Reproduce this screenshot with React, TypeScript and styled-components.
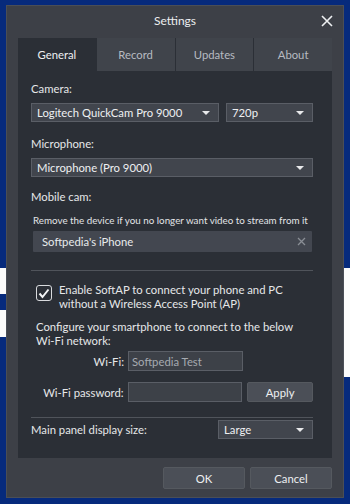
import styled, { createGlobalStyle } from "styled-components";

const GlobalStyle = createGlobalStyle`
  html, body {
    margin: 0;
    padding: 0;
    background: #062a7c;
  }
  body {
    font-family: Lato, "Liberation Sans", sans-serif;
    font-size: 11.3px;
    color: #e6e7e9;
  }
`;

const Desktop = styled.div`
  position: relative;
  width: 350px;
  height: 504px;
  padding: 5px 6px 6px 6px;
  box-sizing: border-box;
  overflow: hidden;
`;

const BackWindow = styled.div<{ $left: number; $top: number; $w: number; $h: number }>`
  position: absolute;
  left: ${(p) => p.$left}px;
  top: ${(p) => p.$top}px;
  width: ${(p) => p.$w}px;
  height: ${(p) => p.$h}px;
  background: #fbfbfb;
`;

const Window = styled.div`
  position: relative;
  z-index: 1;
  height: 100%;
  background: #3d4047;
  border: 1px solid #4a4e56;
  box-sizing: border-box;
  display: flex;
  flex-direction: column;
  padding: 0 11px 8px 11px;
`;

const TitleBar = styled.div`
  position: relative;
  height: 32px;
  box-sizing: border-box;
  padding-bottom: 4px;
  display: flex;
  align-items: center;
  justify-content: center;
  font-size: 12px;
  color: #eceef0;
`;

const Close = styled.div`
  position: absolute;
  right: -2px;
  top: 8px;
  width: 14px;
  height: 14px;
`;

const Tabs = styled.div`
  display: flex;
  gap: 1px;
  height: 33px;
  flex-shrink: 0;
  background: #2b2f36;
`;

const Tab = styled.div<{ $active?: boolean }>`
  flex: 1;
  display: flex;
  align-items: center;
  justify-content: center;
  background: ${(p) => (p.$active ? "#2b2f36" : "#40444b")};
  color: ${(p) => (p.$active ? "#eef0f2" : "#b7bbc1")};
`;

const Panel = styled.div`
  flex: 1;
  background: #2b2f36;
  padding: 10px 19px 0 13px;
  display: flex;
  flex-direction: column;
`;

const Label = styled.div<{ $mt?: number }>`
  margin-top: ${(p) => p.$mt ?? 0}px;
  line-height: 16px;
  margin-bottom: 6px;
`;

const Row = styled.div`
  display: flex;
  gap: 7px;
  align-items: center;
`;

const Select = styled.div<{ $w?: number }>`
  ${(p) => (p.$w ? `width: ${p.$w}px;` : "flex: 1 1 0;")}
  height: 19px;
  box-sizing: border-box;
  background: #41454d;
  border: 1px solid #5a5e66;
  display: flex;
  align-items: center;
  justify-content: space-between;
  padding: 0 8px 0 5px;
  color: #eef0f2;
`;

const FullSelect = styled(Select)`
  flex: none;
`;

const Caret = styled.span`
  width: 0;
  height: 0;
  border-left: 4px solid transparent;
  border-right: 4px solid transparent;
  border-top: 4px solid #e8e9eb;
`;

const Hint = styled.div`
  font-size: 9.8px;
  line-height: 14px;
  margin: 2px 0 4px 2px;
  color: #e2e4e6;
  white-space: nowrap;
`;

const DeviceBox = styled.div`
  margin: 0 1px 0 2px;
  height: 21px;
  flex-shrink: 0;
  background: #434750;
  border-radius: 1px;
  display: flex;
  align-items: center;
  justify-content: space-between;
  padding: 0 6px 0 9px;
  color: #e8eaec;
`;

const Separator = styled.div<{ $mt: number; $mb: number }>`
  height: 1px;
  flex-shrink: 0;
  background: #50545b;
  margin: ${(p) => p.$mt}px 0 ${(p) => p.$mb}px 0;
`;

const CheckRow = styled.div`
  display: flex;
  gap: 7px;
  padding-left: 5px;
  line-height: 14px;
`;

const Check = styled.div`
  width: 14px;
  height: 14px;
  margin-top: 2px;
  flex-shrink: 0;
  border: 1.5px solid #d9dbde;
  border-radius: 3px;
  display: flex;
  align-items: center;
  justify-content: center;
`;

const Para = styled.div`
  padding-left: 5px;
  margin-top: 9px;
  line-height: 14px;
  white-space: nowrap;
`;

const FieldRow = styled.div<{ $mt: number }>`
  display: flex;
  align-items: center;
  margin-top: ${(p) => p.$mt}px;
`;

const FieldLabel = styled.div`
  width: 93px;
  text-align: right;
  padding-right: 4px;
`;

const TextField = styled.div`
  width: 115px;
  height: 20px;
  box-sizing: border-box;
  background: #3d4148;
  border: 1px solid #5a5e66;
  color: #a6aab0;
  display: flex;
  align-items: center;
  padding-left: 3px;
`;

const Button = styled.div<{ $w: number; $h: number }>`
  width: ${(p) => p.$w}px;
  height: ${(p) => p.$h}px;
  box-sizing: border-box;
  background: #4b4f57;
  border: 1px solid #55595f;
  border-radius: 2px;
  display: flex;
  align-items: center;
  justify-content: center;
  color: #eef0f2;
`;

const Footer = styled.div`
  display: flex;
  justify-content: flex-end;
  gap: 5px;
  margin-top: 9px;
`;

export default function App() {
  return (
    <>
      <GlobalStyle />
      <Desktop>
        <BackWindow $left={0} $top={268} $w={10} $h={26} />
        <BackWindow $left={0} $top={310} $w={10} $h={27} />
        <BackWindow $left={340} $top={268} $w={10} $h={109} />
        <Window>
          <TitleBar>
            Settings
            <Close>
              <svg width="14" height="14" viewBox="0 0 14 14">
                <path d="M2 2 L12 12 M12 2 L2 12" stroke="#eef0f2" strokeWidth="1.6" />
              </svg>
            </Close>
          </TitleBar>
          <Tabs>
            <Tab $active>General</Tab>
            <Tab>Record</Tab>
            <Tab>Updates</Tab>
            <Tab>About</Tab>
          </Tabs>
          <Panel>
            <Label>Camera:</Label>
            <Row>
              <Select>
                Logitech QuickCam Pro 9000
                <Caret />
              </Select>
              <Select $w={87}>
                720p
                <Caret />
              </Select>
            </Row>
            <Label $mt={14}>Microphone:</Label>
            <FullSelect>
              Microphone (Pro 9000)
              <Caret />
            </FullSelect>
            <Label $mt={12}>Mobile cam:</Label>
            <Hint>Remove the device if you no longer want video to stream from it</Hint>
            <DeviceBox>
              Softpedia's iPhone
              <svg width="9" height="9" viewBox="0 0 9 9">
                <path d="M1 1 L8 8 M8 1 L1 8" stroke="#8a8e95" strokeWidth="1.3" />
              </svg>
            </DeviceBox>
            <Separator $mt={18} $mb={12} />
            <CheckRow>
              <Check>
                <svg width="12" height="11" viewBox="0 0 12 11">
                  <path d="M1.5 5.5 L4.5 9 L10.5 1.5" fill="none" stroke="#f4f5f6" strokeWidth="2" />
                </svg>
              </Check>
              <div>
                Enable SoftAP to connect your phone and PC
                <br />
                without a Wireless Access Point (AP)
              </div>
            </CheckRow>
            <Para>
              Configure your smartphone to connect to the below
              <br />
              Wi-Fi network:
            </Para>
            <FieldRow $mt={3}>
              <FieldLabel>Wi-Fi:</FieldLabel>
              <TextField>Softpedia Test</TextField>
            </FieldRow>
            <FieldRow $mt={11}>
              <FieldLabel>Wi-Fi password:</FieldLabel>
              <TextField />
              <Button $w={66} $h={20} style={{ marginLeft: 5 }}>
                Apply
              </Button>
            </FieldRow>
            <Separator $mt={15} $mb={2} />
            <Row style={{ justifyContent: "space-between" }}>
              <div>Main panel display size:</div>
              <Select $w={95}>
                Large
                <Caret />
              </Select>
            </Row>
          </Panel>
          <Footer>
            <Button $w={82} $h={22}>OK</Button>
            <Button $w={82} $h={22}>Cancel</Button>
          </Footer>
        </Window>
      </Desktop>
    </>
  );
}
